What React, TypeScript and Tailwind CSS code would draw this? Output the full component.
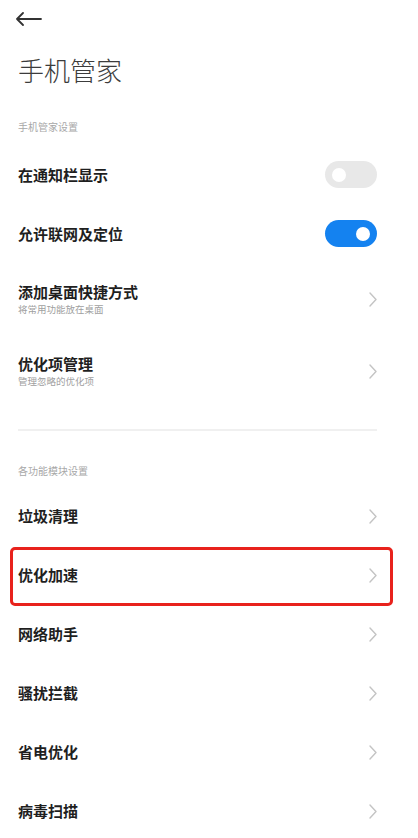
import type { ReactNode } from 'react';

const FONT = { fontFamily: '"Noto Sans CJK SC", "Noto Sans", sans-serif' };

function Chevron() {
  return (
    <svg width="8" height="15" viewBox="0 0 8 15" fill="none" className="shrink-0">
      <path d="M1 1l6 6.5L1 14" stroke="#c4c4c4" strokeWidth="1.4" strokeLinecap="round" strokeLinejoin="round" />
    </svg>
  );
}

function Toggle({ on }: { on: boolean }) {
  return (
    <span
      className={`flex h-[27px] w-[52px] shrink-0 items-center rounded-full px-[7px] ${
        on ? 'justify-end bg-[#1482f0]' : 'justify-start bg-[#e8e8e8]'
      }`}
    >
      <span className="h-[14px] w-[14px] rounded-full bg-white" />
    </span>
  );
}

function Row({
  title,
  subtitle,
  right,
  highlight,
}: {
  title: string;
  subtitle?: string;
  right: ReactNode;
  highlight?: boolean;
}) {
  return (
    <div
      className={`relative flex items-center justify-between ${subtitle ? 'h-[72px]' : 'h-[59px]'}`}
    >
      <div className="min-w-0">
        <p className="text-[15px] font-semibold leading-[20px] text-[#1f1f1f]">{title}</p>
        {subtitle ? (
          <p className="mt-[1px] text-[9.5px] leading-[13px] text-[#a0a0a0]">{subtitle}</p>
        ) : null}
      </div>
      <div className="flex items-center">{right}</div>
      {highlight ? (
        <div className="pointer-events-none absolute -left-[8px] -right-[16px] top-[1px] -bottom-[1px] rounded-[5px] border-[3px] border-[#e8221c]" />
      ) : null}
    </div>
  );
}

export default function App() {
  return (
    <div className="min-h-[838px] w-[418px] bg-white pl-[18px] pr-[41px]" style={FONT}>
      <div className="flex h-[38px] items-center">
        <svg width="27" height="14" viewBox="0 0 27 14" fill="none" className="-ml-[3px]">
          <path d="M26 7H2M8 1L2 7l6 6" stroke="#333" strokeWidth="1.8" strokeLinecap="round" strokeLinejoin="round" />
        </svg>
      </div>

      <h1 className="mt-[14px] h-[36px] text-[26px] font-light leading-[36px] text-[#3c3c3c]">手机管家</h1>

      <p className="mt-[32px] h-[14px] text-[10px] leading-[14px] text-[#a8a8a8]">手机管家设置</p>

      <div className="mt-[11px]">
        <Row title="在通知栏显示" right={<Toggle on={false} />} />
        <Row title="允许联网及定位" right={<Toggle on />} />
        <Row title="添加桌面快捷方式" subtitle="将常用功能放在桌面" right={<Chevron />} />
        <Row title="优化项管理" subtitle="管理忽略的优化项" right={<Chevron />} />
      </div>

      <div className="mt-[22px] h-[1.5px] bg-[#f0f0f0]" />

      <p className="mt-[33px] h-[14px] text-[10px] leading-[14px] text-[#a8a8a8]">各功能模块设置</p>

      <div className="mt-[9px]">
        <Row title="垃圾清理" right={<Chevron />} />
        <Row title="优化加速" right={<Chevron />} highlight />
        <Row title="网络助手" right={<Chevron />} />
        <Row title="骚扰拦截" right={<Chevron />} />
        <Row title="省电优化" right={<Chevron />} />
        <Row title="病毒扫描" right={<Chevron />} />
      </div>
    </div>
  );
}
